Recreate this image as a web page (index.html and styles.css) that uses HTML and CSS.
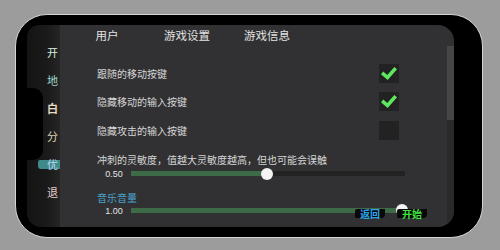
FILE: index.html
```html
<!DOCTYPE html>
<html lang="zh">
<head>
<meta charset="utf-8">
<link rel="stylesheet" href="styles.css">
</head>
<body>
<div class="frame">
  <div class="notch"></div>
  <div class="screen">
    <nav class="side">
      <div class="item c1">开</div>
      <div class="item c2">地</div>
      <div class="item c3">白</div>
      <div class="item c4">分</div>
      <div class="item c5 sel"><span>优</span></div>
      <div class="item c6">退</div>
    </nav>
    <main class="panel">
      <div class="tabs">
        <div class="tab">用户</div>
        <div class="tab">游戏设置</div>
        <div class="tab">游戏信息</div>
      </div>
      <div class="body">
        <div class="content">
          <div class="row"><span class="label">跟随的移动按键</span><span class="check on"><svg viewBox="0 0 20 19" width="20" height="19"><path d="M4.5 10 L8.5 13.5 L15.5 5.5" fill="none" stroke="#5ee85e" stroke-width="3.6" stroke-linejoin="miter" stroke-linecap="square"/></svg></span></div>
          <div class="row"><span class="label">隐藏移动的输入按键</span><span class="check on"><svg viewBox="0 0 20 19" width="20" height="19"><path d="M4.5 10 L8.5 13.5 L15.5 5.5" fill="none" stroke="#5ee85e" stroke-width="3.6" stroke-linejoin="miter" stroke-linecap="square"/></svg></span></div>
          <div class="row"><span class="label">隐藏攻击的输入按键</span><span class="check"></span></div>
          <div class="line">冲刺的灵敏度，值越大灵敏度越高，但也可能会误触</div>
          <div class="slider"><span class="val">0.50</span><div class="track"><div class="fill" style="width:136px"></div><div class="thumb"></div></div></div>
          <div class="line blue">音乐音量</div>
          <div class="slider s2"><span class="val">1.00</span><div class="track"><div class="fill" style="width:271px"></div><div class="thumb"></div></div></div>
        </div>
        <div class="scroll"><div class="sthumb"></div></div>
      </div>
      <div class="btns">
        <span class="btn back">返回</span>
        <span class="btn start">开始</span>
      </div>
    </main>
  </div>
</div>
</body>
</html>
```
FILE: styles.css
```css
* { box-sizing: border-box; }
html, body { margin: 0; padding: 0; }
body {
  width: 500px; height: 250px; overflow: hidden;
  background: #9c9c9c;
  font-family: "Noto Sans CJK SC", "Noto Sans", sans-serif;
}
.frame {
  position: relative;
  margin: 14px 0 0 15px;
  width: 468px; height: 224px;
  border: 1px solid #d4d4d4;
  border-radius: 32px;
  background: #000;
  padding: 10px 28px 10px 11px;
}
.notch {
  position: absolute;
  left: 11px; top: 73px;
  width: 16px; height: 72px;
  background: #000;
  border-radius: 0 10px 10px 0;
  z-index: 2;
}
.screen {
  display: flex;
  width: 427px; height: 202px;
  border-radius: 12px 16px 16px 14px;
  overflow: hidden;
}
.side {
  width: 33px;
  background: linear-gradient(90deg, #141414 0%, #1a1a1a 60%, #252525 100%);
  padding: 13px 0 0 20px;
  display: flex; flex-direction: column;
}
.item {
  position: relative;
  height: 28px; line-height: 28px;
  font-size: 11px;
  white-space: nowrap;
}
.c1 { color: #cfeedd; }
.c2 { color: #9fd8d2; }
.c3 { color: #eadbc4; font-weight: bold; }
.c4 { color: #ddd4b4; }
.c5 { color: #b6d8f0; }
.c6 { color: #e6cccc; }
.sel::before {
  content: "";
  position: absolute;
  left: -9px; top: 10px;
  width: 22px; height: 9px;
  background: #3e8a88;
  border-radius: 2px 0 0 3px;
}
.sel span { position: relative; }
.panel {
  position: relative;
  flex: 1;
  background: #313133;
  display: flex; flex-direction: column;
}
.tabs {
  display: flex;
  height: 20px;
  padding-left: 7px;
}
.tab {
  width: 80px;
  text-align: center;
  font-size: 11.5px;
  line-height: 20px;
  color: #e2e2e2;
}
.body {
  flex: 1;
  display: flex;
  padding-top: 1px;
}
.content {
  flex: 1;
  padding: 13px 0 0 37px;
}
.row {
  width: 302px;
  height: 28.5px;
  display: flex; align-items: center; justify-content: space-between;
}
.label, .line {
  font-size: 10px;
  color: #d6d6d6;
}
.check {
  width: 20px; height: 19px;
  background: #222223;
  display: block;
}
.check svg { display: block; }
.line {
  height: 14px; line-height: 14px;
  margin-top: 8px;
}
.blue { color: #4aa3cf; margin-top: 10px; }
.slider {
  display: flex; align-items: center;
  height: 14px;
}
.s2 { height: 12px; }
.val {
  width: 34px;
  text-align: center;
  font-family: "Liberation Sans", sans-serif;
  font-size: 9px;
  color: #e0e0e0;
}
.track {
  position: relative;
  width: 274px; height: 5px;
  background: #222223;
}
.fill { height: 5px; background: #3d6b47; }
.thumb {
  position: absolute;
  top: -3.5px; left: 130px;
  width: 12px; height: 12px;
  border-radius: 50%;
  background: #f4f4f4;
}
.s2 .thumb { left: 265px; top: -4px; }
.scroll {
  width: 7px;
  background: #2a2a2c;
}
.sthumb { height: 74px; background: #464648; }
.btns {
  position: absolute;
  left: 295px; top: 184px;
  display: flex; gap: 12px;
}
.btn {
  font-size: 10px;
  line-height: 9px;
  height: 9px;
  padding: 0 5px;
  background: #080808;
  border-radius: 2px 0 4px 1px;
  font-weight: bold;
}
.back { color: #2da3e6; }
.start { color: #3fe13f; }
```
